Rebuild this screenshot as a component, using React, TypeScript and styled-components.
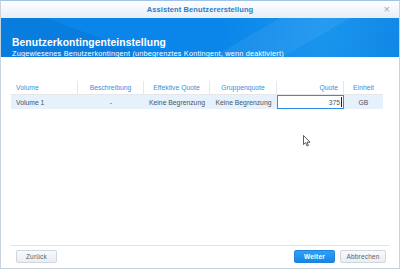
import React from "react";
import styled, { createGlobalStyle } from "styled-components";

const Global = createGlobalStyle`
  html, body { margin: 0; padding: 0; background: #fff; }
  body { font-family: "Liberation Sans", Arial, sans-serif; }
`;

const Win = styled.div`
  position: relative;
  box-sizing: border-box;
  width: 400px;
  height: 269px;
  display: flex;
  flex-direction: column;
  border: 1px solid #c8d3de;
  border-top-color: #9fc3e6;
  background: #fff;
  overflow: hidden;
`;

const TitleBar = styled.div`
  height: 17px;
  flex: none;
  display: flex;
  align-items: center;
  justify-content: center;
  position: relative;
  background: linear-gradient(#ffffff, #e7eef6);
  color: #2c7dc8;
  font-size: 7.5px;
  font-weight: bold;
  letter-spacing: 0.1px;
`;

const Close = styled.span`
  position: absolute;
  right: 9px;
  top: 2px;
  color: #a3a9af;
  font-size: 11px;
  font-weight: normal;
`;

const Header = styled.div`
  height: 39px;
  flex: none;
  box-sizing: border-box;
  padding: 19px 0 0 11px;
  color: #fff;
  background:
    linear-gradient(150deg, transparent 60%, rgba(255,255,255,0.06) 60%, rgba(255,255,255,0.06) 75%, transparent 75%),
    linear-gradient(200deg, transparent 70%, rgba(0,60,140,0.12) 70%),
    linear-gradient(100deg, #0a86ea 55%, #1a95ee 80%, #1088e6 100%);
`;

const HeadTitle = styled.div`
  font-size: 10.3px;
  font-weight: bold;
  line-height: 12px;
  letter-spacing: 0.1px;
`;

const HeadSub = styled.div`
  font-size: 7.3px;
  line-height: 9px;
  letter-spacing: 0.2px;
`;

const Body = styled.div`
  flex: 1;
  padding: 24px 17px 0 10px;
`;

const Table = styled.div`
  display: grid;
  grid-template-columns: 67px 66px 66px 67px 67px 39px;
  font-size: 6.8px;
  white-space: nowrap;
`;

const Th = styled.div<{ $align?: string; $last?: boolean }>`
  height: 13px;
  display: flex;
  align-items: center;
  justify-content: ${(p) => p.$align || "center"};
  padding: 0 5px;
  color: #3d8ddb;
  border-right: ${(p) => (p.$last ? "none" : "1px solid #e4e8ec")};
  border-bottom: 1px solid #e4e8ec;
`;

const Td = styled.div<{ $align?: string }>`
  height: 14px;
  display: flex;
  align-items: center;
  justify-content: ${(p) => p.$align || "center"};
  padding: 0 5px;
  background: #e6f1fc;
  color: #4b5560;
`;

const EditCell = styled.div`
  height: 14px;
  box-sizing: border-box;
  background: #fff;
  border: 1px solid #2f8de4;
  display: flex;
  align-items: center;
  justify-content: flex-end;
  padding-right: 1px;
  color: #4b5560;
`;

const Caret = styled.span`
  display: inline-block;
  width: 1px;
  height: 10px;
  background: #222;
  margin-left: 1px;
`;

const Footer = styled.div`
  flex: none;
  margin: 0 10px;
  border-top: 1px solid #e2e5e8;
  padding: 4px 3px 5px 5px;
  display: flex;
  align-items: center;
`;

const Btn = styled.div<{ $primary?: boolean }>`
  height: 13px;
  box-sizing: border-box;
  display: flex;
  align-items: center;
  justify-content: center;
  font-size: 6.5px;
  letter-spacing: 0.2px;
  border-radius: 2px;
  border: 1px solid ${(p) => (p.$primary ? "#1f83e0" : "#cfd6de")};
  background: ${(p) =>
    p.$primary ? "linear-gradient(#30a0f5, #1687ea)" : "linear-gradient(#f8fafc, #e9eef3)"};
  color: ${(p) => (p.$primary ? "#fff" : "#58626d")};
  font-weight: ${(p) => (p.$primary ? "bold" : "normal")};
`;

const Spacer = styled.div`
  flex: 1;
`;

const Cursor = styled.svg`
  position: absolute;
  left: 302px;
  top: 134px;
`;

export default function App() {
  return (
    <>
      <Global />
      <Win>
        <TitleBar>
          Assistent Benutzererstellung
          <Close>×</Close>
        </TitleBar>
        <Header>
          <HeadTitle>Benutzerkontingenteinstellung</HeadTitle>
          <HeadSub>Zugewiesenes Benutzerkontingent (unbegrenztes Kontingent, wenn deaktiviert)</HeadSub>
        </Header>
        <Body>
          <Table>
            <Th $align="flex-start">Volume</Th>
            <Th>Beschreibung</Th>
            <Th>Effektive Quote</Th>
            <Th>Gruppenquote</Th>
            <Th $align="flex-end">Quote</Th>
            <Th $last>Einheit</Th>
            <Td $align="flex-start">Volume 1</Td>
            <Td>-</Td>
            <Td>Keine Begrenzung</Td>
            <Td>Keine Begrenzung</Td>
            <EditCell>
              375<Caret />
            </EditCell>
            <Td>GB</Td>
          </Table>
        </Body>
        <Footer>
          <Btn style={{ width: 41 }}>Zurück</Btn>
          <Spacer />
          <Btn $primary style={{ width: 41 }}>Weiter</Btn>
          <Btn style={{ width: 46, marginLeft: 5 }}>Abbrechen</Btn>
        </Footer>
        <Cursor width="8" height="12" viewBox="0 0 8 12">
          <path d="M0.5 0.5 L0.5 9.5 L2.6 7.6 L4 11 L5.4 10.4 L4 7.2 L7 7.2 Z" fill="#fff" stroke="#333" strokeWidth="0.8" />
        </Cursor>
      </Win>
    </>
  );
}
